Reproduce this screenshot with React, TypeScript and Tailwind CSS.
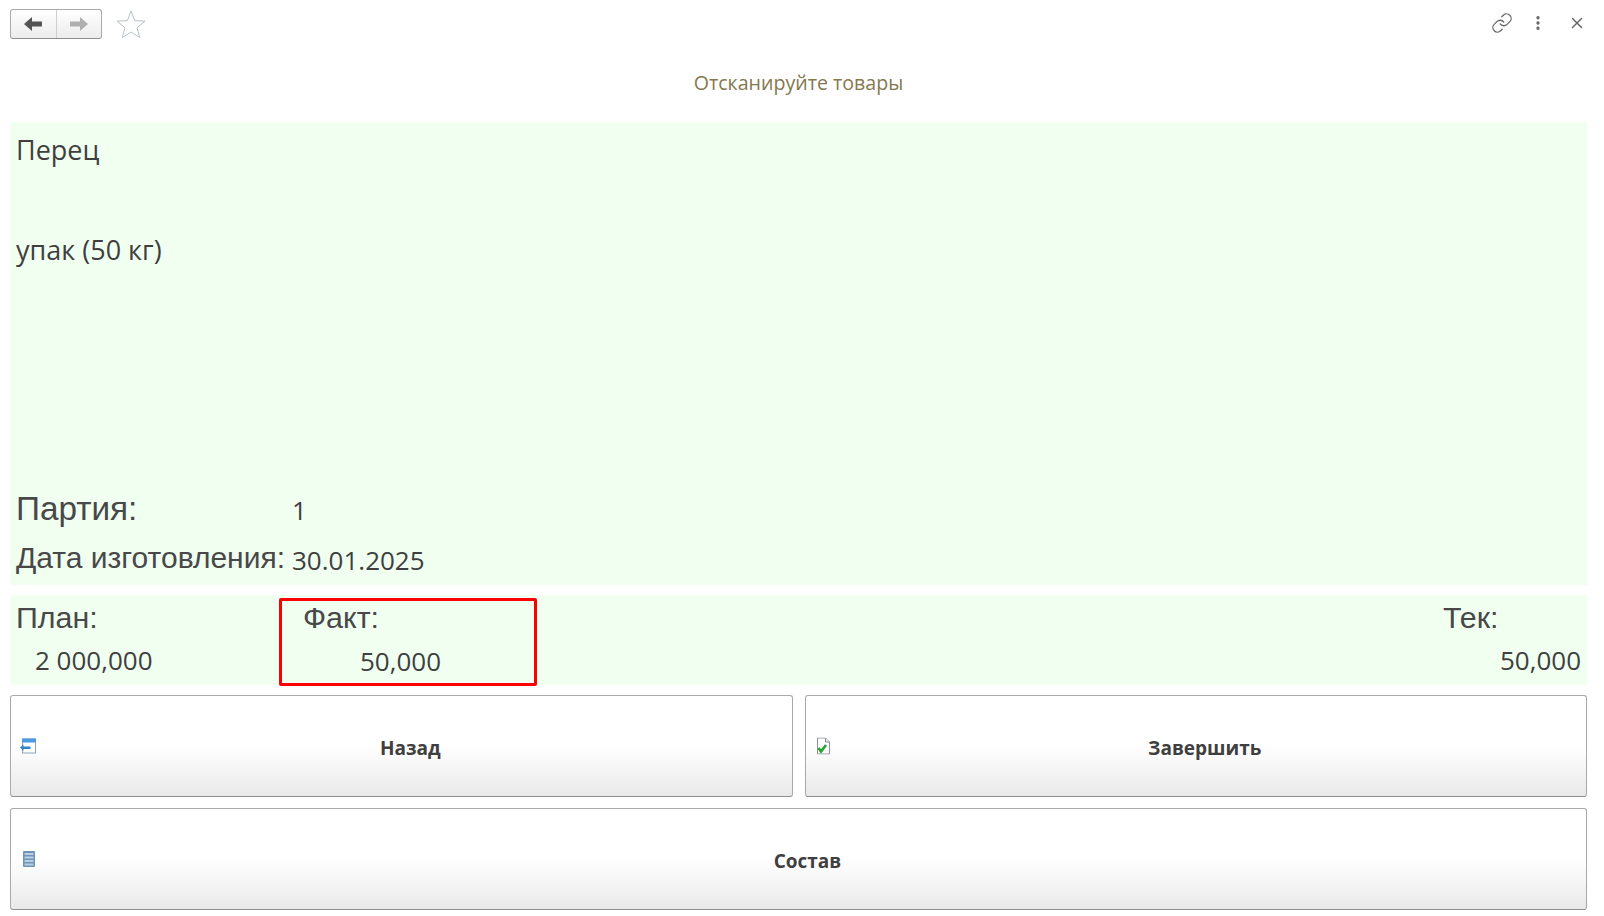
import { X, MoreVertical, Link } from "lucide-react";

const labelFont = "font-['Liberation_Sans',sans-serif]";
const valueFont = "font-['Open_Sans',sans-serif]";

function BackIcon() {
  return (
    <svg viewBox="0 0 16 16" className="h-4 w-4">
      <rect x="2.500" y="1" width="13" height="14" fill="#ffffff" stroke="#8fa3b5" />
      <rect x="2" y="0.500" width="14" height="4" fill="#4a9be0" />
      <path d="M0 9.500l3.500-3v2h7v2.500h-7v2z" fill="#2f86cc" />
    </svg>
  );
}

function DoneIcon() {
  return (
    <svg viewBox="0 0 13 17" className="h-[17px] w-[13px]">
      <path d="M0.500 0.500h8l4 4v12h-12z" fill="#ffffff" stroke="#8a9099" />
      <path d="M8.500 0.500v4h4" fill="#e4e7ea" stroke="#8a9099" />
      <path d="M1.500 10.500l2.500 3.500 5-6.500" fill="none" stroke="#22a52c" strokeWidth="2.600" />
    </svg>
  );
}

function ListIcon() {
  return (
    <svg viewBox="0 0 12 16" className="h-4 w-3">
      <rect x="0" y="0" width="12" height="16" rx="1" fill="#6f94b5" />
      <rect x="1.500" y="2" width="9" height="2" fill="#b9d0e3" />
      <rect x="1.500" y="5.500" width="9" height="2" fill="#b9d0e3" />
      <rect x="1.500" y="9" width="9" height="2" fill="#b9d0e3" />
      <rect x="1.500" y="12.500" width="9" height="2" fill="#b9d0e3" />
    </svg>
  );
}

function BigButton({ label, icon, className }: { label: string; icon: React.ReactNode; className?: string }) {
  return (
    <button
      type="button"
      className={`relative flex h-[102px] items-center justify-center rounded-[3px] border border-[#a9a9a9] border-b-[#8f8f8f] bg-gradient-to-b from-white from-50% to-[#e9e9e9] pl-[18px] pt-[5px] text-[19px] font-bold text-[#3f3f3f] ${valueFont} ${className ?? ""}`}
    >
      <span className="absolute left-[9px] top-1/2 -translate-y-1/2">{icon}</span>
      {label}
    </button>
  );
}

export default function App() {
  return (
    <div className="flex h-[916px] w-[1604px] flex-col overflow-hidden bg-white pl-[10px] pr-[17px] text-[#3f3f3f]">
      {/* Top bar */}
      <div className="flex h-[48px] shrink-0 items-center justify-between">
        <div className="flex items-center">
          <div className="flex h-[30px] w-[92px] rounded-[3px] border border-[#a9a9a9] border-b-[#8f8f8f] bg-gradient-to-b from-white to-[#ececec]">
            <div className="flex flex-1 items-center justify-center border-r border-[#cfcfcf]">
              <svg viewBox="0 0 18 14" className="h-[14px] w-[18px]">
                <path d="M0 7l8-7v4.500h10v5H8V14z" fill="#555555" />
              </svg>
            </div>
            <div className="flex flex-1 items-center justify-center">
              <svg viewBox="0 0 18 14" className="h-[14px] w-[18px]">
                <path d="M18 7l-8-7v4.500H0v5h10V14z" fill="#b0b0b0" />
              </svg>
            </div>
          </div>
          <svg viewBox="0 0 30 28" className="ml-[14px] h-[28px] w-[30px]">
            <path d="M15 1l3.600 9.600L29 11.200l-8 6.500 2.700 9.800L15 22l-8.700 5.500L9 17.700l-8-6.500 10.400-.6z" fill="none" stroke="#b8c0c9" />
          </svg>
        </div>
        <div className="mb-[2px] flex items-center pr-[1px] text-[#666666]">
          <Link className="h-[22px] w-[22px]" strokeWidth={1.4} />
          <MoreVertical className="ml-[16px] h-[18px] w-[18px] fill-current" strokeWidth={2.4} />
          <X className="ml-[21px] h-[18px] w-[18px]" strokeWidth={2} />
        </div>
      </div>

      {/* Title */}
      <div className={`flex h-[74px] shrink-0 items-center justify-center pb-[4px] text-[19.6px] text-[#84784e] ${valueFont}`}>
        Отсканируйте товары
      </div>

      {/* Product panel */}
      <div className="flex h-[463px] shrink-0 flex-col bg-[#f0fff0] px-[6px]">
        <div className={`mt-[12px] text-[27px] leading-[32px] ${valueFont}`}>Перец</div>
        <div className={`mt-[68px] text-[27px] leading-[32px] ${valueFont}`}>упак (50 кг)</div>
        <div className="mt-auto grid grid-cols-[276px_1fr] items-center">
          <div className={`h-[50px] whitespace-nowrap text-[33.300px] leading-[48px] text-[#484848] ${labelFont}`}>Партия:</div>
          <div className={`h-[50px] text-[26px] leading-[50px] ${valueFont}`}>1</div>
          <div className={`h-[50px] whitespace-nowrap text-[30px] leading-[46px] text-[#484848] ${labelFont}`}>Дата изготовления:</div>
          <div className={`h-[50px] text-[26px] leading-[50px] ${valueFont}`}>30.01.2025</div>
        </div>
      </div>

      {/* Totals */}
      <div className="mt-[10px] flex h-[90px] shrink-0 items-start bg-[#f0fff0]">
        <div className="flex w-[269px] shrink-0 flex-col px-[6px]">
          <div className={`h-[44px] text-[30.400px] leading-[44px] text-[#484848] ${labelFont}`}>План:</div>
          <div className={`pl-[19px] text-[26px] leading-[42px] ${valueFont}`}>2 000,000</div>
        </div>
        <div className="mt-[3px] flex h-[88px] w-[258px] shrink-0 flex-col rounded-[2px] border-[3px] border-[#ff0000]">
          <div className={`h-[33px] pl-[21px] text-[30.400px] leading-[33px] text-[#484848] ${labelFont}`}>Факт:</div>
          <div className={`pr-[93px] text-right text-[26px] leading-[54px] ${valueFont}`}>50,000</div>
        </div>
        <div className="ml-auto flex w-[150px] shrink-0 flex-col px-[6px]">
          <div className={`h-[44px] text-[30.400px] leading-[44px] text-[#484848] ${labelFont}`}>Тек:</div>
          <div className={`text-right text-[26px] leading-[42px] ${valueFont}`}>50,000</div>
        </div>
      </div>

      {/* Buttons */}
      <div className="mt-[10px] grid shrink-0 grid-cols-2 gap-[12px]">
        <BigButton label="Назад" icon={<BackIcon />} />
        <BigButton label="Завершить" icon={<span className="ml-[2px] block"><DoneIcon /></span>} />
      </div>
      <BigButton label="Состав" icon={<span className="ml-[3px] block"><ListIcon /></span>} className="mt-[11px] shrink-0" />
    </div>
  );
}
